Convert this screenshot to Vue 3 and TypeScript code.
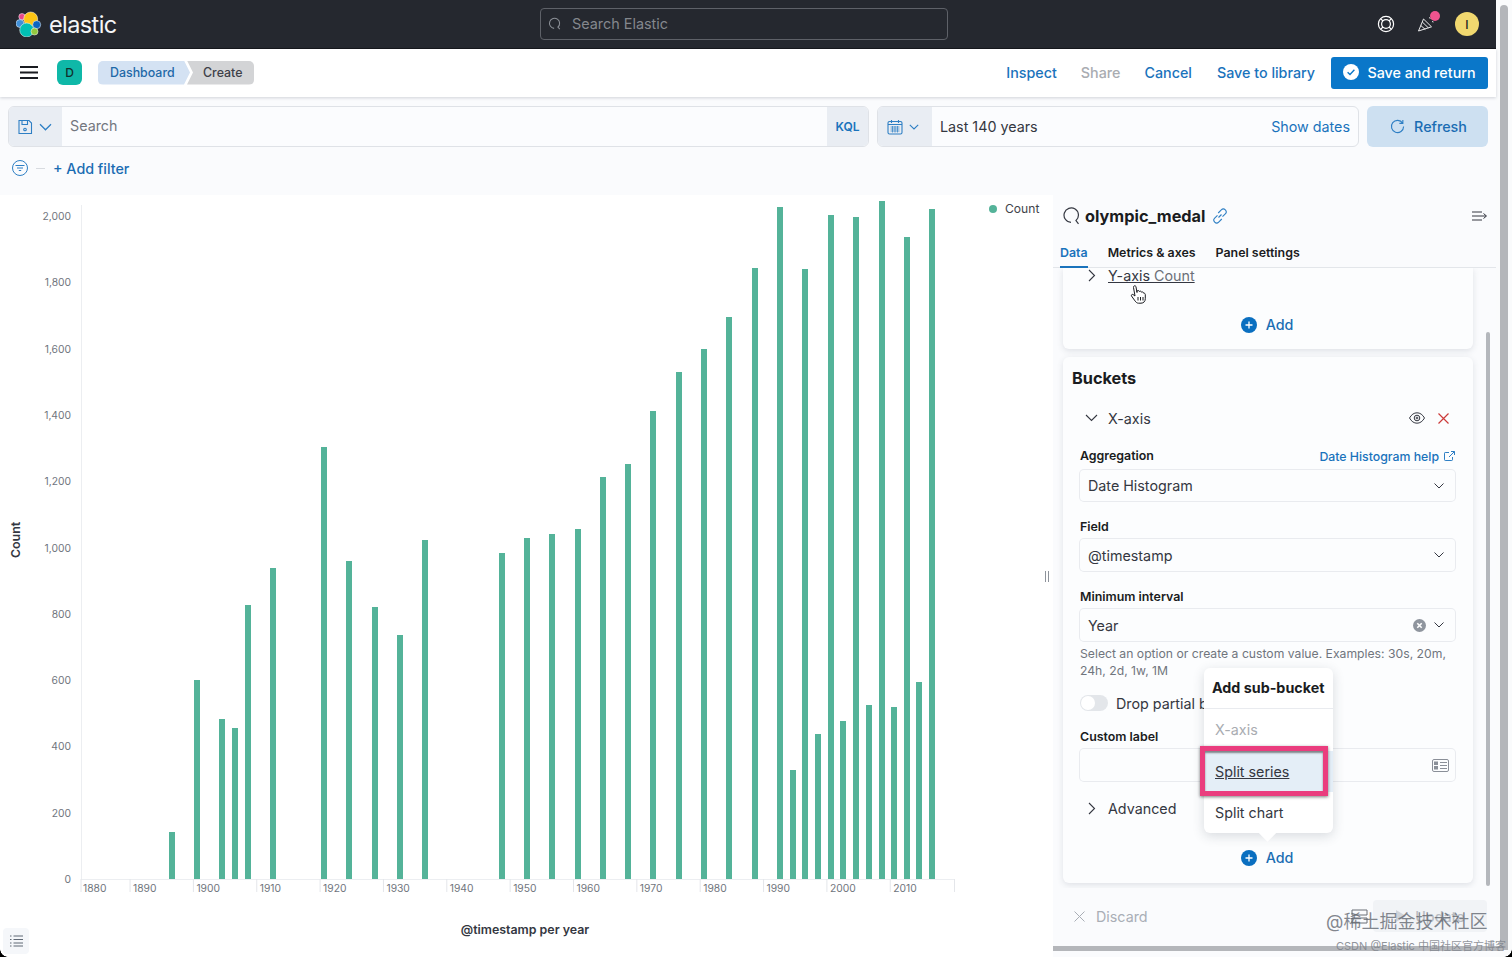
<script setup lang="ts">
const bars: [number, number][] = [
  [172, 832], [197, 680], [222, 719], [235, 728], [248, 605], [273, 568], [324, 447], [349, 561],
  [375, 607], [400, 635], [425, 540], [502, 553], [527, 538], [552, 534], [578, 529], [603, 477],
  [628, 464], [653, 411], [679, 372], [704, 349], [729, 317], [755, 268], [780, 207], [793, 770],
  [805, 269], [818, 734], [831, 215], [843, 721], [856, 217], [869, 705], [882, 201], [894, 707],
  [907, 237], [919, 682], [932, 209],
]
const yTicks = [0, 200, 400, 600, 800, 1000, 1200, 1400, 1600, 1800, 2000].map((v) => ({
  label: v.toLocaleString('en-US'),
  y: 879 - 195 - v * 0.3315 + 4,
}))
const xTicks = Array.from({ length: 14 }, (_, i) => {
  const x = 66.7 + i * 63.35
  return { label: String(1880 + i * 10), tick: Math.max(x, 81), x: i === 0 ? 83 : x + 3 }
})
const navLinks = [
  { label: 'Inspect', off: false },
  { label: 'Share', off: true },
  { label: 'Cancel', off: false },
  { label: 'Save to library', off: false },
]
</script>

<template>
  <div class="page">
    <div class="app">
      <header class="top">
        <div class="brand">
          <svg width="26" height="26" viewBox="0 0 26 26" stroke="#fff" stroke-width=".5">
            <circle cx="6" cy="5.700" r="3.200" fill="#e8488b" />
            <circle cx="14.700" cy="8" r="7" fill="#fec514" />
            <circle cx="4" cy="12.500" r="4" fill="#3f8fd8" />
            <circle cx="20.700" cy="13.700" r="4" fill="#0b64c0" />
            <circle cx="10.700" cy="19" r="7" fill="#00bfb3" />
            <circle cx="18.500" cy="20.500" r="3.500" fill="#93c83e" />
          </svg>
          <span class="word">elastic</span>
        </div>
        <div class="global-search">
          <svg width="14" height="14" viewBox="0 0 16 16" fill="none" stroke="#8d9198" stroke-width="1.2"><path d="M13.500 13.800 11.300 11.600A5.800 5.800 0 1 0 7 13" /></svg>
          <span>Search Elastic</span>
        </div>
        <div class="top-icons">
          <svg class="buoy" width="18" height="18" viewBox="0 0 18 18" fill="none" stroke="#fff" stroke-width="1.200">
            <circle cx="9" cy="9" r="7.600" /><circle cx="9" cy="9" r="4.400" />
            <path d="M3.800 3.800 6 6M14.200 3.800 12 6M3.800 14.200 6 12M14.200 14.200 12 12" />
          </svg>
          <span class="party">
            <svg width="18" height="18" viewBox="0 0 18 18" fill="none" stroke="#fff" stroke-width=".9">
              <path d="M1.500 17 6.500 5l8 7.800z" /><path d="M3.800 11.500l4.500 4M5.300 8l6 5.800" />
              <path d="M12 3.500l1.500 1M15 7.500l1.500.5" />
            </svg>
            <i class="dot"></i>
          </span>
          <span class="avatar">I</span>
        </div>
      </header>

      <div class="sub">
        <svg class="burger" width="18" height="13" viewBox="0 0 18 13" stroke="#1a1c21" stroke-width="1.800"><path d="M0 1h18M0 6.500h18M0 12h18" /></svg>
        <span class="badge">D</span>
        <div class="crumbs">
          <span class="crumb first">Dashboard</span>
          <span class="crumb second">Create</span>
        </div>
        <div class="links">
          <a v-for="l in navLinks" :key="l.label" :class="{ off: l.off }">{{ l.label }}</a>
          <button class="primary">
            <svg width="16" height="16" viewBox="0 0 16 16"><circle cx="8" cy="8" r="8" fill="#fff" /><path d="M4.600 8.200 7 10.500l4.400-4.700" fill="none" stroke="#0a77c9" stroke-width="1.400" /></svg>
            Save and return
          </button>
        </div>
      </div>

      <div class="query">
        <div class="qgroup search">
          <div class="prepend saved">
            <svg width="16" height="16" viewBox="0 0 16 16" fill="none" stroke="#2e7fc4" stroke-width="1.100">
              <path d="M2 1.500h10l2.500 2.500v10.500H2zM5 1.500v4h5.500v-4M5 14.500h6" /><circle cx="8" cy="10.500" r="1.300" />
            </svg>
            <svg width="13" height="8" viewBox="0 0 13 8" fill="none" stroke="#2e7fc4" stroke-width="1.300"><path d="M1 1.200 6.500 6.800 12 1.200" /></svg>
          </div>
          <div class="qinput">Search</div>
          <div class="kql">KQL</div>
        </div>
        <div class="qgroup date">
          <div class="prepend cal">
            <svg width="16" height="16" viewBox="0 0 16 16" fill="none" stroke="#2e7fc4" stroke-width="1.100">
              <rect x="1" y="2.500" width="14" height="12.500" rx="1.500" /><path d="M1 5.500h14M4.500 1v3M11.500 1v3" />
              <path d="M3.500 8h9M3.500 10h9M3.500 12h9M5.500 7v6.500M8 7v6.500M10.500 7v6.500" stroke-width=".7" />
            </svg>
            <svg width="10" height="6" viewBox="0 0 10 6" fill="none" stroke="#2e7fc4" stroke-width="1.100"><path d="M.8.800 5 5 9.200.800" /></svg>
          </div>
          <div class="range">Last 140 years</div>
          <a class="show">Show dates</a>
        </div>
        <button class="refresh">
          <svg width="15" height="15" viewBox="0 0 16 16" fill="none" stroke="#2e7fc4" stroke-width="1.200"><path d="M13.500 4.500A6.500 6.500 0 1 0 14.500 8M13.700 1v3.700H10" /></svg>
          Refresh
        </button>
      </div>

      <div class="filters">
        <svg width="16" height="16" viewBox="0 0 16 16" fill="none" stroke="#2e7fc4" stroke-width="1"><circle cx="8" cy="8" r="7.500" /><path d="M3.500 5.500h9M5 8h6M6.800 10.500h2.400" /></svg>
        <i class="dash"></i>
        <a>+ Add filter</a>
      </div>

      <main class="main">
        <section class="chart">
          <svg class="plot" width="1053" height="762" viewBox="0 0 1053 762">
            <path d="M81.500 10V684" stroke="#eceef1" />
            <path d="M81 684.500H954" stroke="#eceef1" />
            <path v-for="t in xTicks" :key="t.label" :d="`M${t.tick} 684v13`" stroke="#e4e6ea" />
            <path d="M954.500 684v13" stroke="#e4e6ea" />
            <text v-for="t in yTicks" :key="t.y" class="tick" :x="71" :y="t.y" text-anchor="end">{{ t.label }}</text>
            <text v-for="t in xTicks" :key="t.label + 'x'" class="tick" :x="t.x" y="697">{{ t.label }}</text>
            <rect v-for="b in bars" :key="b[0]" :x="b[0] - 3" :y="b[1] - 195" width="6" :height="879 - b[1]" fill="#54b399" />
            <text class="axis" x="0" y="0" transform="translate(20 345) rotate(-90)" text-anchor="middle">Count</text>
            <text class="axis" x="525" y="739" text-anchor="middle">@timestamp per year</text>
            <circle cx="993" cy="14" r="4" fill="#54b399" />
            <text class="legend" x="1005" y="18">Count</text>
            <path d="M1045.500 376v11M1048.500 376v11" stroke="#8e939b" />
          </svg>
          <button class="listbtn">
            <svg width="13" height="12" viewBox="0 0 13 12" stroke="#5f6875" stroke-width="1"><path d="M3.500 1H13M3.500 4.500H13M3.500 8H13M3.500 11H13M0 1h1.500M0 4.500h1.500M0 8h1.500M0 11h1.500" /></svg>
          </button>
        </section>

        <aside class="side">
          <div class="side-head">
            <svg width="18" height="18" viewBox="0 0 18 18" fill="none" stroke="#343741" stroke-width="1.200"><path d="M15.500 16.800 13 13.500A7.200 7.200 0 1 0 8 15.300" /></svg>
            <span class="title">olympic_medal</span>
            <svg width="16" height="16" viewBox="0 0 16 16" fill="none" stroke="#2e7fc4" stroke-width="1.100">
              <path d="M6.500 9.500 9.500 6.500M6.200 5 9.300 1.900a2.800 2.800 0 0 1 4 4L10.500 8.700M9.800 11 6.700 14.100a2.800 2.800 0 0 1-4-4L5.500 7.300" />
            </svg>
            <svg class="collapse" width="15" height="10" viewBox="0 0 15 10" fill="none" stroke="#343741" stroke-width="1"><path d="M0 1h10M0 5h14M0 9h10M11.500 2.500 14.500 5l-3 2.500" /></svg>
          </div>
          <nav class="tabs">
            <span class="tab active">Data</span>
            <span class="tab">Metrics &amp; axes</span>
            <span class="tab">Panel settings</span>
          </nav>

          <div class="scroll">
            <i class="thumb"></i>
            <div class="card first-card">
              <div class="acc y">
                <svg class="chev" width="8" height="13" viewBox="0 0 8 13" fill="none" stroke="#343741" stroke-width="1.100"><path d="M1 1l5.500 5.500L1 12" /></svg>
                <span class="yaxis">Y-axis <em>Count</em></span>
                <svg class="hand" width="18" height="21" viewBox="0 0 18 20" fill="#fff" stroke="#1a1c21" stroke-width="1">
                  <path d="M4 1.500c1-.6 2 0 2 1L7 8V6.500c1-1 2-.5 2.300.5 1-.8 2-.300 2.200.7 1-.6 2-.100 2.200 1 1-.200 1.600.500 1.600 1.500v4c0 2.500-1.500 4.500-4.300 4.500H8.500c-1.500 0-2.500-1-3.500-2.300L1.500 11.500c-.5-1 .5-2 1.500-1.500L5 11.500 3.500 3c0-.7 0-1.200.5-1.500z" />
                  <path d="M8 12.500v3.500M10.500 12.500v3.500M13 12.500v3.500" />
                </svg>
              </div>
              <div class="add first-add">
                <svg width="16" height="16" viewBox="0 0 16 16"><circle cx="8" cy="8" r="8" fill="#0a6fc0" /><path d="M8 4.500v7M4.500 8h7" stroke="#fff" stroke-width="1.300" /></svg>
                Add
              </div>
            </div>

            <div class="card buckets">
              <h3>Buckets</h3>
              <div class="acc xrow">
                <svg class="chev" width="13" height="8" viewBox="0 0 13 8" fill="none" stroke="#343741" stroke-width="1.100"><path d="M1 1l5.500 5.500L12 1" /></svg>
                <span>X-axis</span>
                <svg class="eye" width="16" height="12" viewBox="0 0 16 12" fill="none" stroke="#343741" stroke-width="1"><path d="M.5 6C2.500 2.500 5 .8 8 .8s5.500 1.700 7.500 5.200c-2 3.500-4.500 5.200-7.500 5.200S2.500 9.500.5 6z" /><circle cx="8" cy="6" r="2.800" /><circle cx="8" cy="6" r=".9" /></svg>
                <svg width="11" height="11" viewBox="0 0 11 11" stroke="#cc3b3b" stroke-width="1.200"><path d="M.5.500l10 10M10.500.500l-10 10" /></svg>
              </div>

              <div class="fields">
                <div class="label-row">
                  <label>Aggregation</label>
                  <a class="help">Date Histogram help
                    <svg width="11" height="11" viewBox="0 0 11 11" fill="none" stroke="#2e7fc4" stroke-width="1"><path d="M5 1.500H1.200a.7.700 0 0 0-.7.700v6.600c0 .4.300.7.700.7h6.600c.4 0 .7-.3.700-.7V6M5 6l5.500-5.500M7 .5h3.500V4" /></svg>
                  </a>
                </div>
                <div class="select sel1"><span>Date Histogram</span><svg class="dn" width="10" height="6" viewBox="0 0 10 6" fill="none" stroke="#343741" stroke-width="1"><path d="M.5.500 5 5 9.500.500" /></svg></div>
                <label class="l2">Field</label>
                <div class="select"><span>@timestamp</span><svg class="dn" width="10" height="6" viewBox="0 0 10 6" fill="none" stroke="#343741" stroke-width="1"><path d="M.5.500 5 5 9.500.500" /></svg></div>
                <label class="l3">Minimum interval</label>
                <div class="select">
                  <span>Year</span>
                  <svg class="clear" width="13" height="13" viewBox="0 0 13 13"><circle cx="6.500" cy="6.500" r="6.500" fill="#8f959e" /><path d="M4.300 4.300l4.400 4.400M8.700 4.300 4.300 8.700" stroke="#fff" stroke-width="1.600" /></svg>
                  <svg width="10" height="6" viewBox="0 0 10 6" fill="none" stroke="#343741" stroke-width="1"><path d="M.5.500 5 5 9.500.500" /></svg>
                </div>
                <p class="hint">Select an option or create a custom value. Examples: 30s, 20m, 24h, 2d, 1w, 1M</p>
                <div class="toggle-row"><i class="toggle"><b></b></i><span>Drop partial buckets</span></div>
                <label class="l4">Custom label</label>
                <div class="select blank">
                  <svg class="card-ico" width="17" height="13" viewBox="0 0 17 13"><rect x=".5" y=".5" width="16" height="12" rx="1.500" fill="none" stroke="#8a8f98" /><rect x="2" y="2.500" width="4" height="3.500" fill="#8a8f98" /><rect x="2" y="7" width="4" height="3.500" fill="#8a8f98" /><path d="M8 3.500h7M8 6.500h7M8 9.500h7" stroke="#8a8f98" /></svg>
                </div>
              </div>

              <div class="acc adv">
                <svg class="chev" width="8" height="13" viewBox="0 0 8 13" fill="none" stroke="#343741" stroke-width="1.100"><path d="M1 1l5.500 5.500L1 12" /></svg>
                <span>Advanced</span>
              </div>
              <div class="add last-add">
                <svg width="16" height="16" viewBox="0 0 16 16"><circle cx="8" cy="8" r="8" fill="#0a6fc0" /><path d="M8 4.500v7M4.500 8h7" stroke="#fff" stroke-width="1.300" /></svg>
                Add
              </div>

              <div class="pop">
                <div class="pop-title">Add sub-bucket</div>
                <div class="pop-item dim">X-axis</div>
                <div class="pop-item hl">Split series</div>
                <div class="pop-item">Split chart</div>
                <i class="arrow"></i>
                <i class="pink"></i>
              </div>
            </div>
          </div>

          <footer class="foot">
            <span class="discard">
              <svg width="11" height="11" viewBox="0 0 11 11" stroke="#a9aeb6" stroke-width="1"><path d="M.5.500l10 10M10.500.500l-10 10" /></svg>
              Discard
            </span>
            <span class="update-wrap">
              <svg width="17" height="15" viewBox="0 0 17 15" fill="none" stroke="#6a6f77" stroke-width="1"><path d="M1 1h15v5H1zM1 9h15v5H1z" /></svg>
              <span class="update"><svg width="12" height="14" viewBox="0 0 12 14" fill="#cfd3d9"><path d="M1 1l10 6-10 6z" /></svg>Update</span>
            </span>
          </footer>
          <i class="hbar"></i>
        </aside>
      </main>
    </div>
    <div class="vbar"><i></i></div>
    <span class="wm one">@稀土掘金技术社区</span>
    <span class="wm two">CSDN @Elastic 中国社区官方博客</span>
    <i class="corner bl"></i>
    <i class="corner br"></i>
  </div>
</template>

<style>
html, body { margin: 0; overflow: hidden; background: #fff; }
</style>

<style scoped>
.page { position: relative; display: flex; width: 1512px; height: 957px; overflow: hidden; font-family: Inter, "Noto Sans CJK SC", sans-serif; color: #343741; background: #fff; }
.app { width: 1496px; height: 957px; display: flex; flex-direction: column; background: #fafbfd; }
.vbar { width: 16px; background: #fafbfc; }
.vbar i { display: block; width: 8px; height: 945px; margin: 5px 0 0 4px; background: #b4b6ba; border-radius: 4px 4px 0 0; }

.top { height: 48px; flex: none; display: flex; align-items: center; position: relative; background: #25282f; border-bottom: 1px solid #15171b; }
.brand { display: flex; align-items: center; gap: 7px; margin-left: 16px; }
.word { color: #f5f6f7; font-size: 23.500px; letter-spacing: -.6px; }
.global-search { position: absolute; left: 540px; top: 8px; width: 408px; height: 32px; box-sizing: border-box; border: 1px solid #5e6168; border-radius: 4px; display: flex; align-items: center; gap: 10px; padding: 0 0 1px 7px; color: #84878d; font-size: 14.400px; }
.top-icons { margin-left: auto; display: flex; align-items: center; gap: 22px; margin-right: 17px; }
.party { position: relative; width: 18px; height: 18px; margin-top: -2px; margin-right: -2px; }
.party svg { display: block; }
.dot { position: absolute; left: 13px; top: -3px; width: 10px; height: 10px; border-radius: 50%; background: #f0548f; }
.avatar { width: 24px; height: 24px; border-radius: 50%; background: #f1d86f; color: #1a1c21; font-size: 12px; font-weight: 500; display: flex; align-items: center; justify-content: center; }

.sub { height: 48px; flex: none; display: flex; align-items: center; background: #fff; box-shadow: 0 1px 3px rgba(40, 50, 70, .2); position: relative; z-index: 2; }
.burger { margin-left: 20px; margin-top: -1px; }
.badge { width: 25px; height: 25px; margin-left: 19px; margin-top: -1px; border-radius: 6px; background: #0fb8a8; color: #10302c; font-size: 12px; font-weight: 500; display: flex; align-items: center; justify-content: center; }
.crumbs { display: flex; margin-left: 16px; margin-top: -1px; }
.crumb { height: 24px; display: flex; align-items: center; font-size: 12.400px; font-weight: 500; }
.first { width: 92px; box-sizing: border-box; padding-left: 12px; background: #d4e2f3; color: #1f69a8; border-radius: 5px 0 0 5px; clip-path: polygon(0 0, 86px 0, 100% 50%, 86px 100%, 0 100%); }
.second { width: 67px; margin-left: -3px; box-sizing: border-box; padding-left: 16px; background: #d3d4d6; color: #3d4048; border-radius: 0 5px 5px 0; clip-path: polygon(0 0, 100% 0, 100% 100%, 0 100%, 6px 50%); }
.links { margin-left: auto; margin-right: 8px; display: flex; align-items: center; }
.links a { color: #1a73bc; font-size: 14.300px; font-weight: 500; margin-right: 24px; margin-top: -2px; }
.links a:nth-of-type(3) { margin-right: 25px; }
.links a:last-of-type { margin-right: 16px; }
.links a.off { color: #a9acb1; }
.primary { width: 157px; height: 32px; border: 0; border-radius: 3px; background: #0a77c9; color: #fff; font: 500 14.300px Inter, sans-serif; display: flex; align-items: center; justify-content: center; gap: 8px; padding: 0 0 2px; }

.query { flex: none; display: flex; gap: 8px; margin-top: 9px; padding: 0 8px; height: 41px; }
.qgroup { display: flex; align-items: stretch; box-sizing: border-box; height: 41px; border: 1px solid #dfe2e7; border-radius: 6px; overflow: hidden; background: #fbfcfe; }
.search { width: 861px; }
.date { width: 482px; }
.prepend { width: 53px; flex: none; background: #e9edf3; display: flex; align-items: center; justify-content: center; gap: 6px; }
.saved { padding-right: 2px; box-sizing: border-box; }
.cal { width: 54px; box-sizing: border-box; padding-right: 4px; }
.qinput { flex: 1; display: flex; align-items: center; padding-left: 8px; font-size: 14.300px; color: #73777f; margin-top: -2px; }
.kql { width: 41px; flex: none; background: #e9edf3; color: #1a73bc; font-size: 12px; font-weight: 600; display: flex; align-items: center; justify-content: center; }
.range { flex: 1; display: flex; align-items: center; padding-left: 8px; font-size: 14.300px; color: #343741; }
.show { display: flex; align-items: center; padding-right: 8px; color: #1a73bc; font-size: 14.300px; }
.refresh { width: 121px; height: 41px; border: 0; border-radius: 6px; background: #cde0f1; color: #1a6db3; font: 500 14.300px Inter, sans-serif; display: flex; align-items: center; justify-content: center; gap: 9px; padding: 0 0 0 2px; }

.filters { flex: none; height: 48px; display: flex; align-items: center; padding-left: 12px; }
.filters svg { margin-top: -6px; }
.dash { width: 9px; height: 1px; margin: -6px 8px 0 8px; background: #d8dbe0; }
.filters a { color: #1a6db3; font-size: 14.300px; font-weight: 500; margin-top: -6px; }

.main { flex: none; height: 762px; display: flex; }
.chart { position: relative; width: 1053px; flex: none; background: #fff; }
.plot { display: block; }
.tick { font: 10.300px Inter, sans-serif; fill: #70757d; }
.axis { font: 600 12.400px Inter, sans-serif; fill: #343741; }
.legend { font: 12.100px Inter, sans-serif; fill: #3f434b; }
.listbtn { position: absolute; left: 3px; bottom: 3px; width: 26px; height: 26px; border: 0; padding: 0; background: #f5f7fa; border-radius: 4px; display: flex; align-items: center; justify-content: center; }

.side { position: relative; width: 443px; flex: none; display: flex; flex-direction: column; }
.side-head { height: 42px; flex: none; display: flex; align-items: center; padding: 0 9px 0 10px; gap: 4px; }
.title { font-size: 16.300px; font-weight: 700; color: #1a1c21; margin-right: 3px; }
.collapse { margin-left: auto; }
.tabs { height: 31px; flex: none; display: flex; gap: 20px; padding-left: 7px; box-sizing: border-box; border-bottom: 1px solid #e3e6ea; align-items: stretch; position: relative; z-index: 1; background: #fafbfd; }
.tab { font-size: 12.400px; font-weight: 600; color: #1a1c21; padding-top: 8px; }
.active { color: #1a73bc; border-bottom: 2px solid #1a73bc; margin-bottom: -1px; }

.scroll { position: relative; height: 620px; flex: none; padding: 0 10px; overflow: hidden; }
.thumb { position: absolute; right: 6px; top: 64px; width: 4px; height: 554px; border-radius: 2px; background: #b4b7bc; }
.card { width: 410px; background: #fcfdfe; border-radius: 6px; box-shadow: 0 2px 6px rgba(60, 70, 90, .14); position: relative; }
.first-card { height: 81px; border-radius: 0 0 6px 6px; }
.acc { display: flex; align-items: center; font-size: 14.300px; color: #343741; }
.chev { flex: none; }
.y { height: 14px; padding-left: 25px; position: relative; }
.yaxis { margin-left: 12px; text-decoration: underline; }
.yaxis em { font-style: normal; color: #6b7078; }
.hand { position: absolute; left: 67px; top: 16px; }
.add { display: flex; align-items: center; justify-content: center; gap: 9px; color: #1a6db3; font-size: 14.300px; font-weight: 500; padding-right: 2px; }
.first-add { margin-top: 34px; }
.buckets { margin-top: 8px; height: 526px; padding: 0; }
h3 { margin: 0; padding: 11px 0 0 9px; font-size: 16.300px; font-weight: 700; color: #1a1c21; line-height: 20px; }
.xrow { margin-top: 20px; height: 20px; padding-left: 22px; padding-right: 24px; }
.xrow span { margin: 0 auto 0 10px; }
.eye { margin-right: 13px; }
.fields { padding: 0 18px 0 17px; }
label { display: block; font-size: 12.400px; font-weight: 600; color: #1a1c21; line-height: 16px; }
.label-row { display: flex; justify-content: space-between; align-items: center; margin-top: 20px; height: 16px; }
.help { color: #1a73bc; font-size: 12.300px; font-weight: 500; display: flex; align-items: center; gap: 5px; }
.select { height: 32px; box-sizing: border-box; margin-top: 4px; background: #fcfdfe; border-radius: 4px; box-shadow: 0 0 0 1px #e9ebef; display: flex; align-items: center; padding: 0 11px 0 8px; font-size: 14.300px; color: #343741; }
.sel1 { margin-top: 6px; height: 31px; }
.select > span { flex: 1; }
.clear { margin-right: 8px; }
.l2 { margin-top: 18px; }
.l3 { margin-top: 18px; }
.hint { margin: 4px 0 0; font-size: 12.200px; line-height: 17px; color: #70757d; }
.toggle-row { display: flex; align-items: center; gap: 8px; margin-top: 15px; height: 18px; font-size: 14.300px; white-space: nowrap; }
.toggle { position: relative; width: 28px; height: 16px; border-radius: 8px; background: #e3e6ea; }
.toggle b { position: absolute; left: 1px; top: 1px; width: 14px; height: 14px; border-radius: 50%; background: #fff; }
.l4 { margin-top: 17px; }
.blank { margin-top: 4px; justify-content: flex-end; padding-right: 6px; }
.adv { margin-top: 18px; padding-left: 25px; height: 18px; }
.adv span { margin-left: 12px; }
.last-add { margin-top: 32px; }

.pop { position: absolute; left: 141px; top: 311px; width: 129px; height: 165px; background: #fff; border-radius: 6px; box-shadow: 0 3px 12px rgba(50, 60, 80, .18); font-size: 14.300px; z-index: 3; }
.pop-title { height: 41px; box-sizing: border-box; padding: 11px 0 0 8px; border-bottom: 1px solid #e9ebef; font-weight: 700; color: #1a1c21; white-space: nowrap; }
.pop-item { height: 41.500px; padding-left: 11px; display: flex; align-items: center; color: #343741; }
.dim { color: #a9acb1; }
.hl { text-decoration: underline; background: #e4eef7; position: relative; }
.arrow { position: absolute; left: 57px; bottom: -6px; width: 13px; height: 13px; background: #fff; transform: rotate(45deg); }
.pink { position: absolute; left: -4px; top: 78px; width: 128px; height: 50px; box-sizing: border-box; border: 5px solid #ea3d7e; box-shadow: 0 1px 3px rgba(0, 0, 0, .5), inset 0 2px 2px rgba(0, 0, 0, .45); }

.foot { flex: none; display: flex; align-items: center; justify-content: space-between; height: 60px; box-sizing: border-box; padding: 0 9px 14px 21px; margin-top: 5px; color: #a9aeb6; font-size: 14.300px; }
.discard { display: flex; align-items: center; gap: 11px; }
.update-wrap { display: flex; align-items: center; gap: 5px; }
.update { width: 114px; height: 32px; background: #f1f3f6; border-radius: 4px; display: flex; align-items: center; justify-content: center; gap: 8px; box-sizing: border-box; color: #b8bcc3; font-weight: 500; }
.hbar { position: absolute; left: 0; bottom: 6px; width: 447px; height: 5px; background: #b4b6ba; z-index: 1; }

.wm { position: absolute; white-space: nowrap; z-index: 5; }
.one { left: 1326px; top: 907px; font-size: 18px; color: rgba(90, 96, 105, .75); }
.two { left: 1336px; top: 937px; font-size: 11px; color: rgba(125, 130, 138, .85); }
.corner { position: absolute; bottom: 0; width: 8px; height: 8px; z-index: 6; }
.bl { left: 0; background: radial-gradient(circle at 100% 0, transparent 7.500px, #000 8px); }
.br { right: 0; background: radial-gradient(circle at 0 0, transparent 7.500px, #000 8px); }
</style>
